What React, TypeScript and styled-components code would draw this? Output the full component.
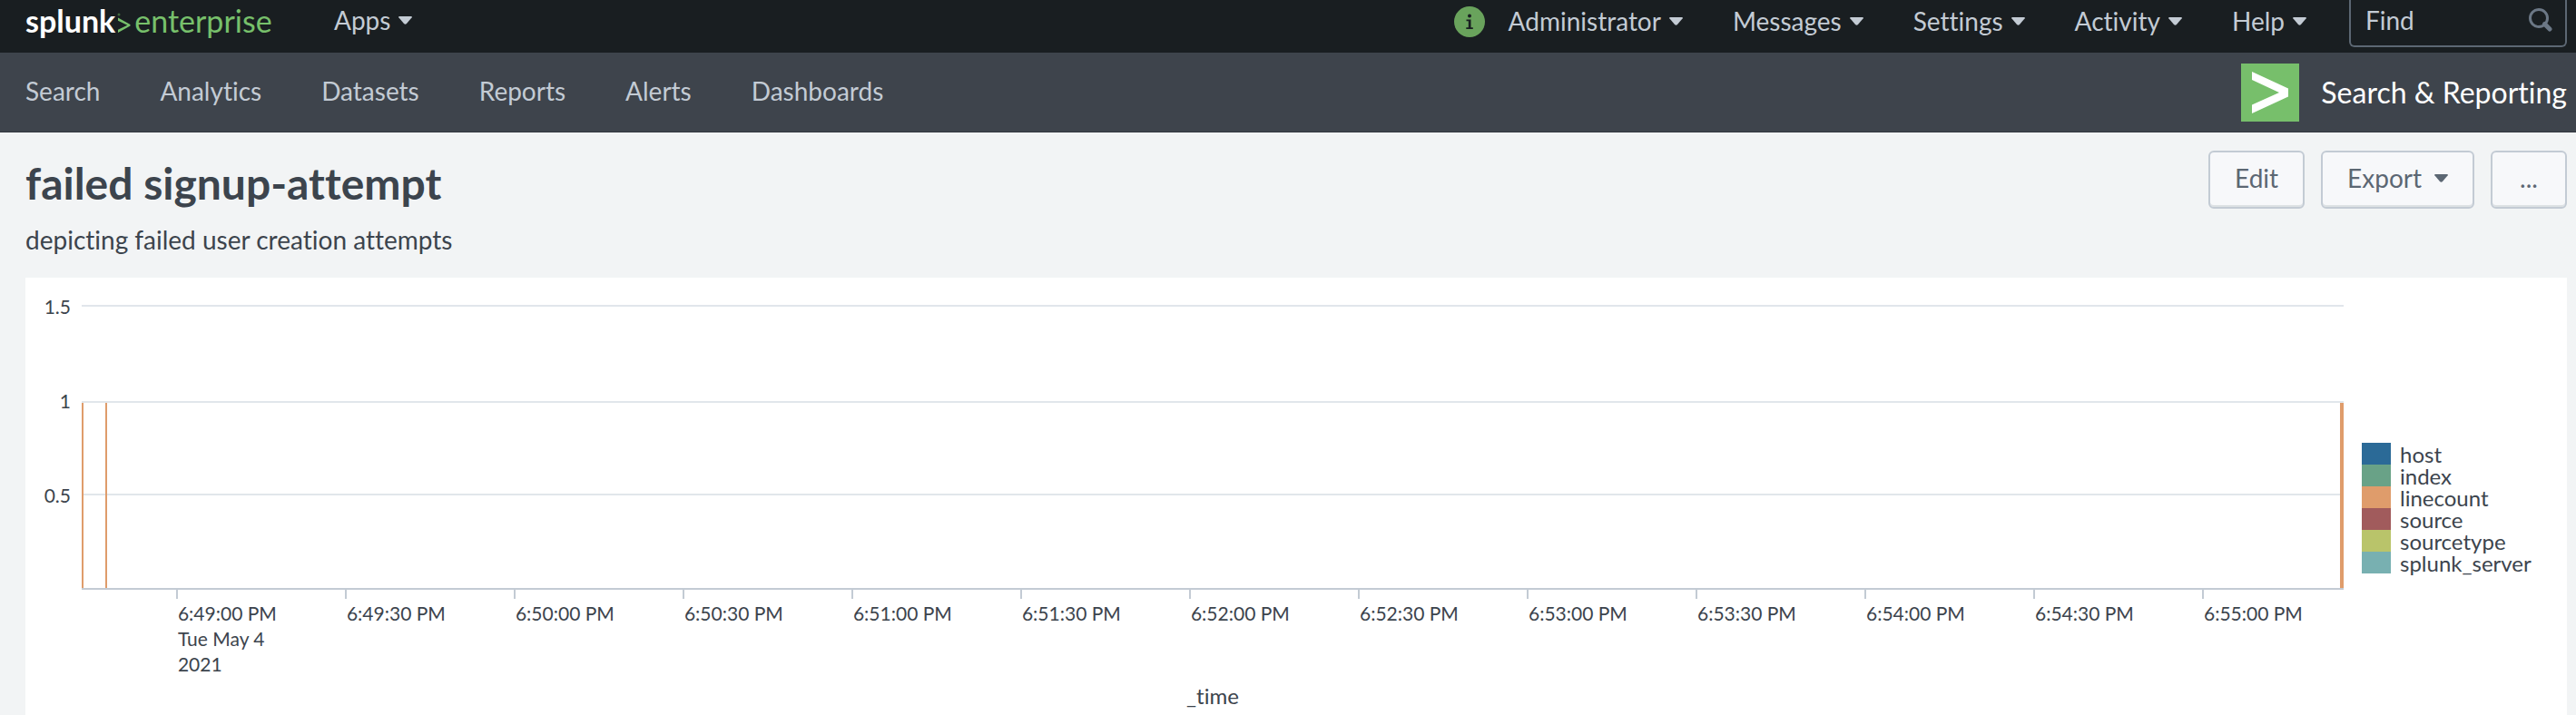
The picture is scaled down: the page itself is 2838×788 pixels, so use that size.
import React from "react";
import styled, { createGlobalStyle } from "styled-components";

const color = {
  black: "#191e21",
  slate: "#3e444c",
  ink: "#3c444d",
  muted: "#5c6773",
  silver: "#c3cbd4",
  grid: "#e1e6eb",
  page: "#f2f4f5",
  green: "#77c06b",
};

const GlobalStyle = createGlobalStyle`
  *, *::before, *::after { box-sizing: border-box; }
  body {
    margin: 0;
    background: ${color.page};
    color: ${color.ink};
    font-family: Lato, "Liberation Sans", sans-serif;
    font-size: 28px;
    line-height: 34px;
    font-variant-ligatures: none;
  }
  h1, p, ul, ol, figure { margin: 0; padding: 0; }
  ul, ol { list-style: none; }
  a { color: inherit; text-decoration: none; }
  button, input { font: inherit; }
`;

const Page = styled.div`
  display: flex;
  flex-direction: column;
  min-height: 100vh;
`;

const TopBar = styled.header`
  display: flex;
  align-items: flex-start;
  height: 58px;
  padding: 0 10px 0 28px;
  background: ${color.black};
  color: ${color.silver};
`;

const Logo = styled.a`
  display: flex;
  align-items: baseline;
  min-width: 274px;
  margin-right: 66px;
  line-height: 46px;
  color: ${color.green};
  font-size: 34px;
`;

const LogoName = styled.b`
  color: #fff;
`;

const LogoChevron = styled.svg`
  width: 16px;
  height: 24px;
  margin: 0 3px 0 2px;
`;

const MenuGroup = styled.nav`
  display: flex;
  gap: 55px;
  padding-top: 5px;
`;

const AccountMenus = styled(MenuGroup)`
  margin-left: auto;
  margin-right: 47px;
`;

const MenuButton = styled.button`
  display: flex;
  align-items: center;
  gap: 9px;
  padding: 0;
  border: 0;
  background: none;
  color: inherit;
`;

const CaretIcon = styled.svg`
  width: 15px;
  height: 12px;
  fill: currentColor;
`;

const AccountStatus = styled.div`
  display: flex;
  gap: 26px;
`;

const InfoIcon = styled.svg`
  width: 34px;
  height: 34px;
  margin-top: 2px;
`;

const SearchBox = styled.label`
  display: flex;
  width: 240px;
  height: 52px;
  padding: 5px 14px 11px 16px;
  border: 2px solid ${color.muted};
  border-top: 0;
  border-radius: 0 0 6px 6px;
`;

const SearchInput = styled.input`
  flex: 1;
  min-width: 0;
  padding: 0;
  border: 0;
  outline: 0;
  background: none;
  color: ${color.silver};
  &::placeholder { color: ${color.silver}; opacity: 1; }
`;

const SearchIcon = styled.svg`
  width: 26px;
  height: 26px;
  margin-top: 4px;
`;

const AppBar = styled.div`
  display: flex;
  align-items: center;
  justify-content: space-between;
  height: 88px;
  padding: 0 10px 0 28px;
  border-bottom: 1px solid #32373e;
  background: ${color.slate};
`;

const AppNav = styled.nav`
  display: flex;
  gap: 66px;
  padding-bottom: 4px;
  color: ${color.silver};
`;

const AppName = styled.a`
  display: flex;
  align-items: center;
  gap: 24px;
  color: #fff;
  font-size: 32px;
`;

const AppMark = styled.svg`
  width: 64px;
  height: 64px;
`;

const DashboardHeader = styled.section`
  display: flex;
  align-items: flex-start;
  justify-content: space-between;
  padding: 20px 10px 25px 28px;
`;

const Title = styled.h1`
  padding-top: 6px;
  font-size: 48px;
  line-height: 60px;
`;

const Description = styled.p`
  margin-top: 15px;
`;

const Actions = styled.div`
  display: flex;
  gap: 18px;
`;

const ActionButton = styled.button`
  display: flex;
  align-items: center;
  justify-content: center;
  gap: 14px;
  min-width: 84px;
  height: 64px;
  padding: 0 27px 5px;
  border: 2px solid ${color.silver};
  border-radius: 6px;
  background: #f7f8fa;
  box-shadow: inset 0 -2px 0 #dde1e4;
  color: ${color.muted};
`;

const Panel = styled.main`
  flex: 1;
  margin: 0 10px 0 28px;
  padding-top: 20px;
  background: #fff;
`;

const Chart = styled.figure`
  display: grid;
  grid-template-columns: 62px minmax(0, 1fr) 246px;
`;

const ValueAxis = styled.ol`
  padding-right: 12px;
  font-size: 21px;
  line-height: 24px;
  text-align: right;
`;

const ValueLabel = styled.li`
  height: 104px;
`;

const PlotColumn = styled.div`
  padding-top: 10px;
`;

const Plot = styled.svg`
  display: block;
  width: 100%;
  height: 314px;
  shape-rendering: crispEdges;
`;

const TimeAxis = styled.ol`
  display: grid;
  grid-template-columns: repeat(12, minmax(0, 186fr)) minmax(0, 156fr);
  padding-left: 4.17%;
  font-size: 21px;
  line-height: 28px;
`;

const TimeLabel = styled.li`
  padding-left: 2px;
  white-space: pre-line;
  &::before {
    content: "";
    display: block;
    width: 2px;
    height: 10px;
    margin: 0 0 2px -2px;
    background: ${color.silver};
  }
`;

const AxisTitle = styled.p`
  margin-top: 7px;
  font-size: 24px;
  line-height: 28px;
  text-align: center;
`;

const Legend = styled.ul`
  padding: 162px 0 0 20px;
  font-size: 24px;
  line-height: 26px;
`;

const LegendItem = styled.li`
  display: flex;
  gap: 10px;
  height: 24px;
`;

const Swatch = styled.span<{ $fill: string }>`
  width: 32px;
  height: 24px;
  background: ${(p) => p.$fill};
`;

const Caret = () => (
  <CaretIcon viewBox="0 1 15 12" aria-hidden="true">
    <path d="M1 3h13q1.300 0 .7 1.200L9 11q-1.500 1.600-3 0L.3 4.200Q-.3 3 1 3z" />
  </CaretIcon>
);

const Menu = ({ label }: { label: string }) => (
  <MenuButton type="button" aria-haspopup="menu">
    {label}
    <Caret />
  </MenuButton>
);

const appLinks = ["Search", "Analytics", "Datasets", "Reports", "Alerts", "Dashboards"];

const times = [
  "6:49:00 PM\nTue May 4\n2021", "6:49:30 PM", "6:50:00 PM", "6:50:30 PM", "6:51:00 PM",
  "6:51:30 PM", "6:52:00 PM", "6:52:30 PM", "6:53:00 PM", "6:53:30 PM", "6:54:00 PM",
  "6:54:30 PM", "6:55:00 PM",
];

const series = [
  { name: "host", fill: "#2b6a97" },
  { name: "index", fill: "#69a287" },
  { name: "linecount", fill: "#df9c6b" },
  { name: "source", fill: "#a15b5c" },
  { name: "sourcetype", fill: "#b9c46a" },
  { name: "splunk_server", fill: "#78b0b1" },
];

export default function App() {
  return (
    <Page>
      <GlobalStyle />
      <TopBar>
        <Logo href="#">
          <LogoName>splunk</LogoName>
          <LogoChevron viewBox="0 0 16 24" aria-hidden="true">
            <path d="M1 7.500L14.500 15v1.500L1 24v-3.200l10.300-5L1 10.700z" fill={color.green} />
            <circle cx="2" cy="4" r="1.500" fill="#41683d" />
          </LogoChevron>
          <span>enterprise</span>
        </Logo>
        <MenuGroup aria-label="Apps">
          <Menu label="Apps" />
        </MenuGroup>
        <AccountMenus aria-label="Account">
          <AccountStatus>
            <InfoIcon viewBox="0 0 34 34" role="img" aria-label="Health status">
              <circle cx="17" cy="17" r="17" fill="#69a35c" />
              <circle cx="17" cy="10.500" r="2" fill={color.black} />
              <path d="M13.500 14.500h5v8.700h2.300V25h-7.500v-1.800h2.500v-6.900h-2.300z" fill={color.black} />
            </InfoIcon>
            <Menu label="Administrator" />
          </AccountStatus>
          <Menu label="Messages" />
          <Menu label="Settings" />
          <Menu label="Activity" />
          <Menu label="Help" />
        </AccountMenus>
        <SearchBox>
          <SearchInput type="text" placeholder="Find" aria-label="Find" />
          <SearchIcon viewBox="0 0 26 26" fill="none" stroke="#6b7785" aria-hidden="true">
            <circle cx="11" cy="11" r="9.500" strokeWidth="3" />
            <path d="M17.500 17.500l5.500 5.500" strokeWidth="5" strokeLinecap="round" />
          </SearchIcon>
        </SearchBox>
      </TopBar>
      <AppBar>
        <AppNav aria-label="Search and Reporting">
          {appLinks.map((link) => (
            <a key={link} href="#">{link}</a>
          ))}
        </AppNav>
        <AppName href="#">
          <AppMark viewBox="0 0 64 64" aria-hidden="true">
            <path d="M0 0h64v64H0z" fill="#77bf6b" />
            <path d="M12 9l40 18.500v9L12 55v-9.500L42 32 12 18z" fill="#fff" />
          </AppMark>
          Search &amp; Reporting
        </AppName>
      </AppBar>
      <DashboardHeader>
        <div>
          <Title>failed signup-attempt</Title>
          <Description>depicting failed user creation attempts</Description>
        </div>
        <Actions>
          <ActionButton type="button">Edit</ActionButton>
          <ActionButton type="button" aria-haspopup="menu">
            Export
            <Caret />
          </ActionButton>
          <ActionButton type="button" aria-label="More actions">...</ActionButton>
        </Actions>
      </DashboardHeader>
      <Panel>
        <Chart>
          <ValueAxis>
            <ValueLabel>1.5</ValueLabel>
            <ValueLabel>1</ValueLabel>
            <ValueLabel>0.5</ValueLabel>
          </ValueAxis>
          <PlotColumn>
            <Plot role="img" aria-label="Line count over time">
              {[0, 106, 208].map((y) => (
                <rect key={y} y={y} width="100%" height="2" fill={color.grid} />
              ))}
              <rect y="108" width="2" height="204" fill="#df9c6b" />
              <rect x="1.043%" y="108" width="2" height="204" fill="#df9c6b" />
              <rect x="100%" y="108" width="4" height="204" fill="#df9c6b" transform="translate(-4)" />
              <rect y="312" width="100%" height="2" fill={color.silver} />
            </Plot>
            <TimeAxis>
              {times.map((time) => (
                <TimeLabel key={time}>{time}</TimeLabel>
              ))}
            </TimeAxis>
            <AxisTitle>_time</AxisTitle>
          </PlotColumn>
          <Legend>
            {series.map(({ name, fill }) => (
              <LegendItem key={name}>
                <Swatch $fill={fill} />
                {name}
              </LegendItem>
            ))}
          </Legend>
        </Chart>
      </Panel>
    </Page>
  );
}
